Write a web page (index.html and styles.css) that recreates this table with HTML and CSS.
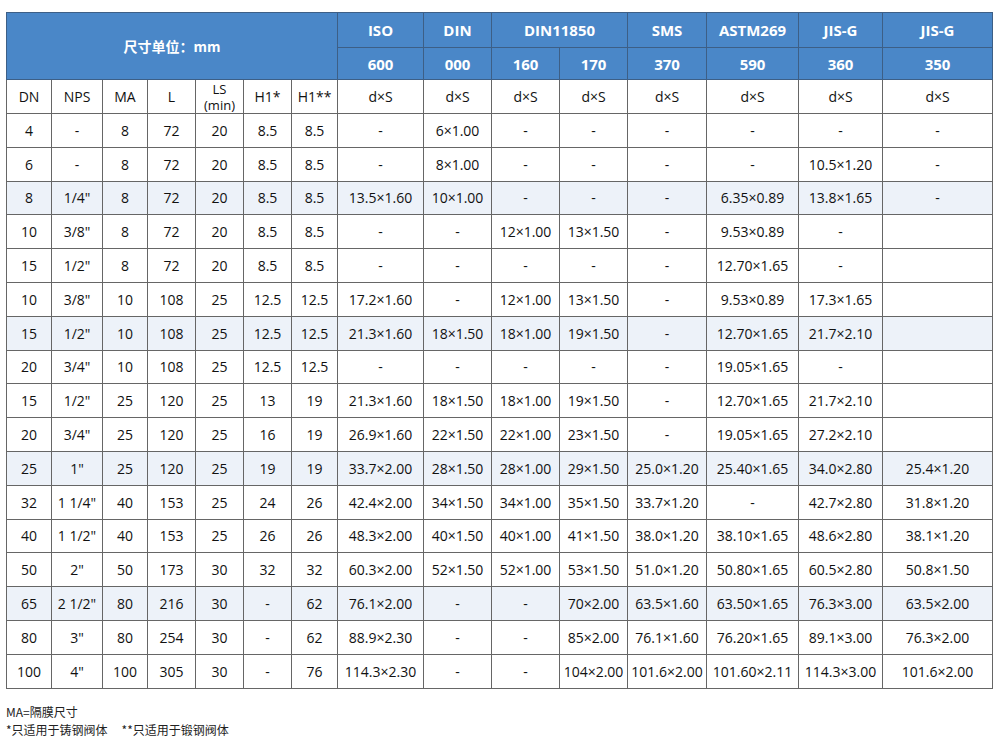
FILE: index.html
```html
<!DOCTYPE html>
<html lang="zh">
<head>
<meta charset="utf-8">
<title>尺寸表</title>
<link rel="stylesheet" href="styles.css">
</head>
<body>
<div class="page">
<table class="spec">
<colgroup>
<col class="c45"><col class="c51"><col class="c45"><col class="c48"><col class="c48"><col class="c48"><col class="c46">
<col class="c86"><col class="c68"><col class="c68"><col class="c68"><col class="c79"><col class="c92"><col class="c84"><col class="c110">
</colgroup>
<thead>
<tr class="h1">
<th colspan="7" rowspan="2" class="unit">尺寸单位：mm</th>
<th>ISO</th><th>DIN</th><th colspan="2">DIN11850</th><th>SMS</th><th>ASTM269</th><th>JIS-G</th><th>JIS-G</th>
</tr>
<tr class="h2">
<th>600</th><th>000</th><th>160</th><th>170</th><th>370</th><th>590</th><th>360</th><th>350</th>
</tr>
<tr class="h3">
<td>DN</td><td>NPS</td><td>MA</td><td>L</td><td class="ls"><span class="ls-line">LS</span><span class="ls-line">(min)</span></td><td>H1*</td><td>H1**</td>
<td>d×S</td><td>d×S</td><td>d×S</td><td>d×S</td><td>d×S</td><td>d×S</td><td>d×S</td><td>d×S</td>
</tr>
</thead>
<tbody>
<tr><td>4</td><td>-</td><td>8</td><td>72</td><td>20</td><td>8.5</td><td>8.5</td><td>-</td><td>6×1.00</td><td>-</td><td>-</td><td>-</td><td>-</td><td>-</td><td>-</td></tr>
<tr><td>6</td><td>-</td><td>8</td><td>72</td><td>20</td><td>8.5</td><td>8.5</td><td>-</td><td>8×1.00</td><td>-</td><td>-</td><td>-</td><td>-</td><td>10.5×1.20</td><td>-</td></tr>
<tr class="hl"><td>8</td><td>1/4"</td><td>8</td><td>72</td><td>20</td><td>8.5</td><td>8.5</td><td>13.5×1.60</td><td>10×1.00</td><td>-</td><td>-</td><td>-</td><td>6.35×0.89</td><td>13.8×1.65</td><td>-</td></tr>
<tr><td>10</td><td>3/8"</td><td>8</td><td>72</td><td>20</td><td>8.5</td><td>8.5</td><td>-</td><td>-</td><td>12×1.00</td><td>13×1.50</td><td>-</td><td>9.53×0.89</td><td>-</td><td></td></tr>
<tr><td>15</td><td>1/2"</td><td>8</td><td>72</td><td>20</td><td>8.5</td><td>8.5</td><td>-</td><td>-</td><td>-</td><td>-</td><td>-</td><td>12.70×1.65</td><td>-</td><td></td></tr>
<tr><td>10</td><td>3/8"</td><td>10</td><td>108</td><td>25</td><td>12.5</td><td>12.5</td><td>17.2×1.60</td><td>-</td><td>12×1.00</td><td>13×1.50</td><td>-</td><td>9.53×0.89</td><td>17.3×1.65</td><td></td></tr>
<tr class="hl"><td>15</td><td>1/2"</td><td>10</td><td>108</td><td>25</td><td>12.5</td><td>12.5</td><td>21.3×1.60</td><td>18×1.50</td><td>18×1.00</td><td>19×1.50</td><td>-</td><td>12.70×1.65</td><td>21.7×2.10</td><td></td></tr>
<tr><td>20</td><td>3/4"</td><td>10</td><td>108</td><td>25</td><td>12.5</td><td>12.5</td><td>-</td><td>-</td><td>-</td><td>-</td><td>-</td><td>19.05×1.65</td><td>-</td><td></td></tr>
<tr><td>15</td><td>1/2"</td><td>25</td><td>120</td><td>25</td><td>13</td><td>19</td><td>21.3×1.60</td><td>18×1.50</td><td>18×1.00</td><td>19×1.50</td><td>-</td><td>12.70×1.65</td><td>21.7×2.10</td><td></td></tr>
<tr><td>20</td><td>3/4"</td><td>25</td><td>120</td><td>25</td><td>16</td><td>19</td><td>26.9×1.60</td><td>22×1.50</td><td>22×1.00</td><td>23×1.50</td><td>-</td><td>19.05×1.65</td><td>27.2×2.10</td><td></td></tr>
<tr class="hl"><td>25</td><td>1"</td><td>25</td><td>120</td><td>25</td><td>19</td><td>19</td><td>33.7×2.00</td><td>28×1.50</td><td>28×1.00</td><td>29×1.50</td><td>25.0×1.20</td><td>25.40×1.65</td><td>34.0×2.80</td><td>25.4×1.20</td></tr>
<tr><td>32</td><td>1 1/4"</td><td>40</td><td>153</td><td>25</td><td>24</td><td>26</td><td>42.4×2.00</td><td>34×1.50</td><td>34×1.00</td><td>35×1.50</td><td>33.7×1.20</td><td>-</td><td>42.7×2.80</td><td>31.8×1.20</td></tr>
<tr><td>40</td><td>1 1/2"</td><td>40</td><td>153</td><td>25</td><td>26</td><td>26</td><td>48.3×2.00</td><td>40×1.50</td><td>40×1.00</td><td>41×1.50</td><td>38.0×1.20</td><td>38.10×1.65</td><td>48.6×2.80</td><td>38.1×1.20</td></tr>
<tr><td>50</td><td>2"</td><td>50</td><td>173</td><td>30</td><td>32</td><td>32</td><td>60.3×2.00</td><td>52×1.50</td><td>52×1.00</td><td>53×1.50</td><td>51.0×1.20</td><td>50.80×1.65</td><td>60.5×2.80</td><td>50.8×1.50</td></tr>
<tr class="hl"><td>65</td><td>2 1/2"</td><td>80</td><td>216</td><td>30</td><td>-</td><td>62</td><td>76.1×2.00</td><td>-</td><td>-</td><td>70×2.00</td><td>63.5×1.60</td><td>63.50×1.65</td><td>76.3×3.00</td><td>63.5×2.00</td></tr>
<tr><td>80</td><td>3"</td><td>80</td><td>254</td><td>30</td><td>-</td><td>62</td><td>88.9×2.30</td><td>-</td><td>-</td><td>85×2.00</td><td>76.1×1.60</td><td>76.20×1.65</td><td>89.1×3.00</td><td>76.3×2.00</td></tr>
<tr><td>100</td><td>4"</td><td>100</td><td>305</td><td>30</td><td>-</td><td>76</td><td>114.3×2.30</td><td>-</td><td>-</td><td>104×2.00</td><td>101.6×2.00</td><td>101.60×2.11</td><td>114.3×3.00</td><td>101.6×2.00</td></tr>
</tbody>
</table>
<div class="notes">
<p>MA=隔膜尺寸</p>
<p><span class="note">*只适用于铸钢阀体</span><span class="note">**只适用于锻钢阀体</span></p>
</div>
</div>
</body>
</html>
```
FILE: styles.css
```css
html, body {
  margin: 0;
  padding: 0;
  background: #ffffff;
}
.page {
  padding: 12px 0 0 6px;
  font-family: "Open Sans", "Noto Sans CJK SC", sans-serif;
  color: #111111;
}
.spec {
  border-collapse: collapse;
  table-layout: fixed;
  width: 987px;
  font-size: 14px;
}
.spec td, .spec th {
  border: 1px solid #666666;
  text-align: center;
  vertical-align: middle;
  padding: 0;
  white-space: nowrap;
  overflow: hidden;
}
.c45 { width: 45px; }
.c46 { width: 46px; }
.c48 { width: 48px; }
.c51 { width: 51px; }
.c68 { width: 68px; }
.c79 { width: 79px; }
.c84 { width: 84px; }
.c86 { width: 86px; }
.c92 { width: 92px; }
.c110 { width: 110px; }
.spec th {
  background: #4a87c8;
  color: #ffffff;
  font-weight: 700;
  font-size: 15px;
  border-color: #3d5f86;
}
.h1 { height: 35px; }
.h2 { height: 32px; }
.h3 { height: 34px; }
.spec th.unit {
  font-family: "Noto Sans CJK SC", "Open Sans", sans-serif;
  font-size: 14px;
}
.spec td.ls { font-size: 13px; }
.ls-line {
  display: block;
  height: 16px;
  line-height: 16px;
}
.spec tbody tr { height: 33.8px; }
.spec tbody tr.hl td { background: #edf2f9; }
.notes {
  margin-top: 14px;
  font-family: "Noto Sans CJK SC", sans-serif;
  font-size: 12px;
  line-height: 18px;
  color: #222;
}
.notes p { margin: 0; }
.note + .note { margin-left: 14px; }
```
